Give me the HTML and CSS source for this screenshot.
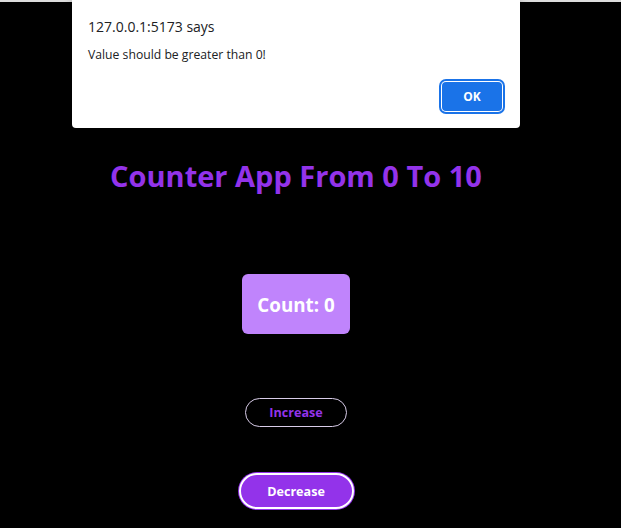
FILE: index.html
```html
<!DOCTYPE html>
<html lang="en">
<head>
<meta charset="utf-8">
<title>Counter App</title>
<link rel="stylesheet" href="styles.css">
</head>
<body>
<div class="topline"></div>
<main class="app">
  <h1 class="title">Counter App From 0 To 10</h1>
  <div class="count">Count: 0</div>
  <button class="btn btn-inc">Increase</button>
  <button class="btn btn-dec">Decrease</button>
</main>
<div class="dialog">
  <div class="dialog-title">127.0.0.1:5173 says</div>
  <div class="dialog-msg">Value should be greater than 0!</div>
  <div class="dialog-actions"><button class="ok">OK</button></div>
</div>
</body>
</html>
```
FILE: styles.css
```css
html, body {
  margin: 0;
  padding: 0;
  background: #000;
  height: 100%;
  overflow: hidden;
}
body {
  font-family: "Open Sans", "Noto Sans", sans-serif;
}
.topline {
  height: 2px;
  background: #dcdcdc;
}
.app {
  width: 592px;
  display: flex;
  flex-direction: column;
  align-items: center;
  padding-top: 157px;
}
.title {
  margin: 0;
  font-size: 29px;
  line-height: 34px;
  font-weight: 700;
  color: #9333ea;
  letter-spacing: 0;
}
.count {
  margin-top: 81px;
  width: 108px;
  height: 60px;
  border-radius: 6px;
  background: #c084fc;
  color: #fff;
  font-weight: 700;
  font-size: 18.8px;
  padding-top: 2px;
  box-sizing: border-box;
  display: flex;
  align-items: center;
  justify-content: center;
}
.btn {
  font-family: inherit;
  font-weight: 700;
  font-size: 12.6px;
  border-radius: 999px;
  cursor: pointer;
}
.btn-inc {
  margin-top: 64px;
  width: 102px;
  height: 29px;
  background: transparent;
  border: 1px solid #d8cce8;
  color: #9333ea;
}
.btn-dec {
  margin-top: 46px;
  width: 115px;
  height: 36px;
  background: #9333ea;
  border: 2px solid #fff;
  box-shadow: 0 0 0 1px #9333ea;
  color: #fff;
}
.dialog {
  position: absolute;
  left: 72px;
  top: 0;
  width: 448px;
  height: 128px;
  background: #fff;
  border-radius: 0 0 4px 4px;
  box-shadow: 0 2px 8px rgba(0,0,0,0.4);
  box-sizing: border-box;
  padding: 17px 16px 0 16px;
  font-family: "Open Sans", "Noto Sans", sans-serif;
  color: #202124;
}
.dialog-title {
  font-size: 14px;
  line-height: 20px;
}
.dialog-msg {
  margin-top: 10px;
  font-size: 12.2px;
  line-height: 16px;
}
.dialog-actions {
  display: flex;
  justify-content: flex-end;
  margin-top: 19px;
  padding-right: 2px;
}
.ok {
  width: 60px;
  height: 29px;
  background: #1a73e8;
  color: #fff;
  border: none;
  border-radius: 4px;
  font-family: inherit;
  font-weight: 700;
  font-size: 12px;
  box-shadow: 0 0 0 1px #fff, 0 0 0 3px #1a73e8;
}
```
